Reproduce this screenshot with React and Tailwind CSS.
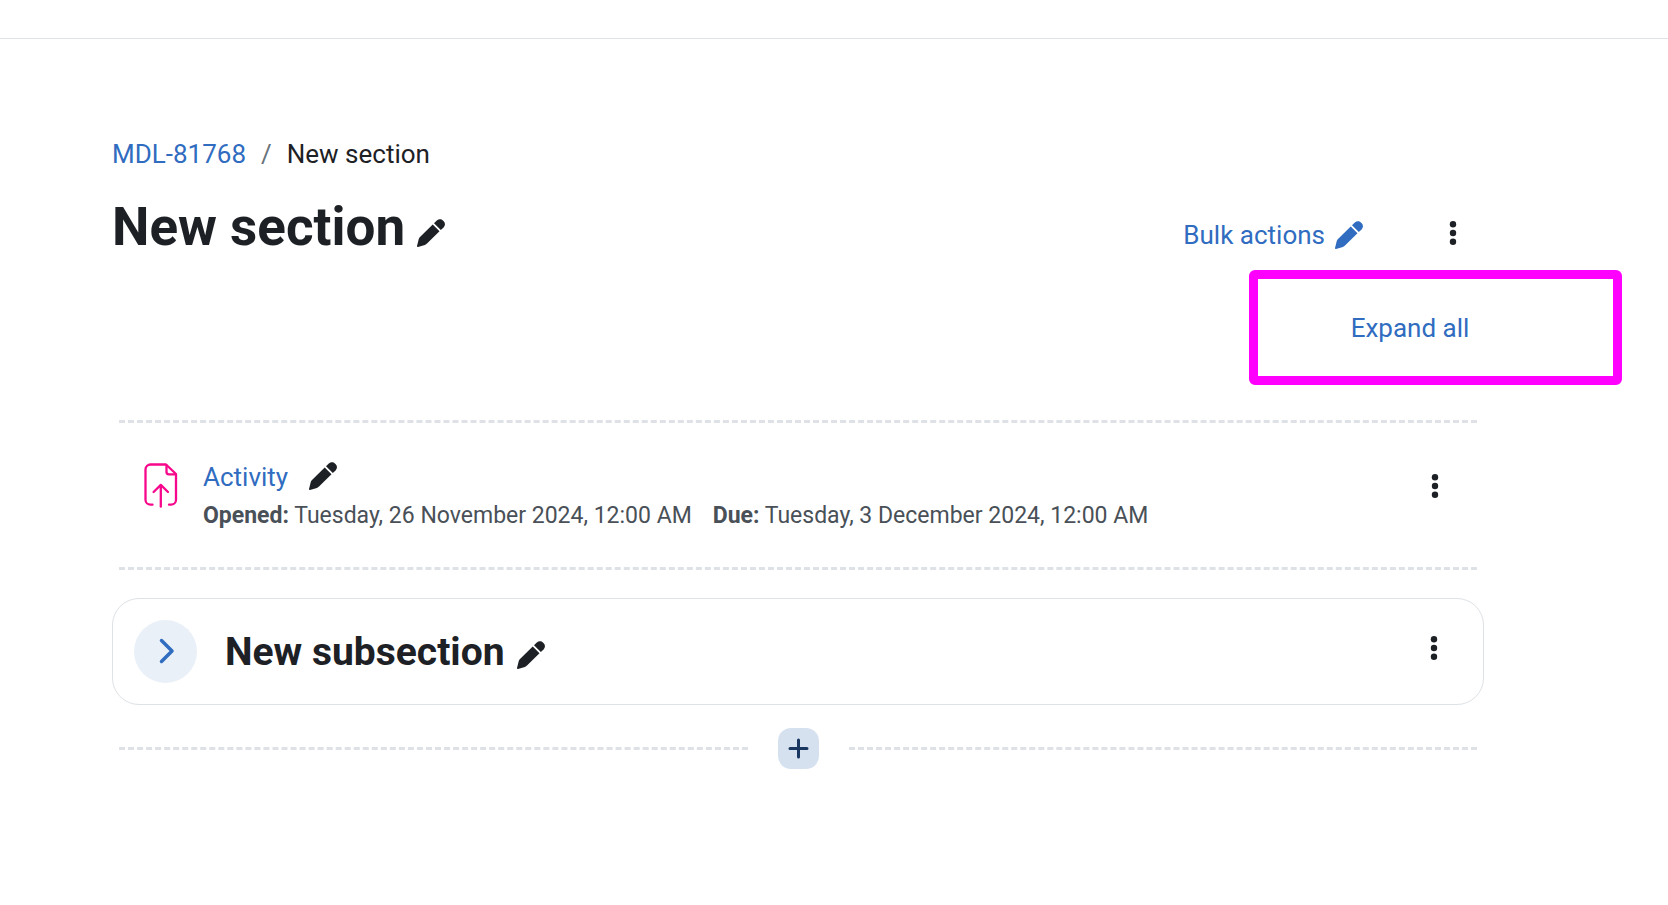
import { useState } from 'react';

const PencilIcon = () => (
  <svg viewBox="0 0 28 28" className="w-7 h-7 shrink-0" fill="currentColor" aria-hidden="true">
    <path d="M1 28C.3 28.100-.1 27.600 0 27L1.700 20.200C1.900 19.300 2.300 18.600 3 18L15.700 5.500L22.500 12.300L10 24.600C9.400 25.200 8.700 25.700 7.900 25.900Z" />
    <path d="M17 4.300L19.800 1.600C21.800-.3 24.300-.2 26.100 1.700L26.500 2.100C28.400 4 28.500 6.400 26.600 8.400L23.800 11.100Z" />
  </svg>
);

const DotsIcon = () => (
  <svg viewBox="0 0 8 24" className="w-2 h-6" fill="currentColor" aria-hidden="true">
    <circle cx="4" cy="3.300" r="3.200" />
    <circle cx="4" cy="12" r="3.200" />
    <circle cx="4" cy="20.700" r="3.200" />
  </svg>
);

const AssignIcon = () => (
  <svg
    viewBox="0 0 34 45"
    className="w-[34px] h-[45px] shrink-0"
    fill="none"
    stroke="currentColor"
    strokeWidth="2.300"
    strokeLinecap="round"
    strokeLinejoin="round"
    aria-hidden="true"
  >
    <path d="M8.500 41.700H6.500A5 5 0 0 1 1.500 36.700V6.500A5 5 0 0 1 6.500 1.500H22L32 11V36.700A5 5 0 0 1 27 41.700H25" />
    <path d="M22.500 2.500V9A2.300 2.300 0 0 0 24.800 11.300H31.500" />
    <path d="M16.800 43.700V22M9.600 29L16.800 21.900L24 29" />
  </svg>
);

const MenuButton = ({ label }) => (
  <button type="button" aria-label={label} className="flex items-center justify-center w-10 h-10 text-[#1d2125]">
    <DotsIcon />
  </button>
);

const Divider = () => <div className="flex-1 border-t-[3px] border-dashed border-[#dee2e6]" />;

export default function App() {
  const [expanded, setExpanded] = useState(false);

  return (
    <div className="min-h-screen bg-white text-[#1d2125] text-[26px] leading-[39px] font-['Roboto',sans-serif]">
      <header className="h-[39px] border-b border-[#dee2e6]" />

      <main className="pl-28 pr-[184px] pt-24">
        <nav aria-label="Breadcrumb">
          <ol className="flex">
            <li><a href="#course" className="text-[#306cbf]">MDL-81768</a></li>
            <li className="px-[15px] text-[#6a737b]" aria-hidden="true">/</li>
            <li>New section</li>
          </ol>
        </nav>

        <div className="flex items-center justify-between mt-[21px]">
          <div className="flex items-center gap-3">
            <h1 className="text-[53px] leading-[64px] font-bold">New section</h1>
            <button type="button" aria-label="Edit section name" className="pt-3">
              <PencilIcon />
            </button>
          </div>
          <div className="flex items-center pt-4 pr-[11px]">
            <button type="button" className="flex items-center gap-2.5 text-[#306cbf]">
              Bulk actions
              <PencilIcon />
            </button>
            <div className="ml-[70px] pb-1">
              <MenuButton label="Section menu" />
            </div>
          </div>
        </div>

        <div className="flex justify-end mt-[11px] -mr-[138px]">
          <div className="flex items-center justify-center w-[373px] h-[115px] pt-0.5 pr-[51px] border-[9px] border-[#ff00ff] rounded-md">
            <button type="button" onClick={() => setExpanded(!expanded)} className="text-[#306cbf]">
              Expand all
            </button>
          </div>
        </div>

        <div className="flex mt-[35px] px-[7px]"><Divider /></div>

        <section className="flex items-start justify-between pl-8 pr-[29px] h-36 pt-[35px]">
          <div className="flex items-start gap-[25px]">
            <span className="pt-[5px] text-[#f7078b]"><AssignIcon /></span>
            <div>
              <div className="flex items-center gap-[21px]">
                <a href="#activity" className="text-[#306cbf]">Activity</a>
                <button type="button" aria-label="Edit title" className="pb-1"><PencilIcon /></button>
              </div>
              <div className="flex gap-[21px] text-[23px] leading-[37px] text-[#495057]">
                <span><strong>Opened:</strong> Tuesday, 26 November 2024, 12:00 AM</span>
                <span><strong>Due:</strong> Tuesday, 3 December 2024, 12:00 AM</span>
              </div>
            </div>
          </div>
          <div className="pt-2">
            <MenuButton label="Activity menu" />
          </div>
        </section>

        <div className="flex px-[7px]"><Divider /></div>

        <section className="flex items-center justify-between mt-7 h-[107px] pl-[21px] pr-[29px] border border-[#dee2e6] rounded-[27px]">
          <div className="flex items-center">
            <button
              type="button"
              aria-label="Expand"
              aria-expanded={expanded}
              onClick={() => setExpanded(!expanded)}
              className="flex items-center justify-center w-[63px] h-[63px] pl-[3px] pb-0.5 rounded-full bg-[#e9f0f8] text-[#306cbf]"
            >
              <svg viewBox="0 0 16 26" className="w-4 h-[26px]" fill="none" stroke="currentColor" strokeWidth="3.500" strokeLinecap="round" strokeLinejoin="round" aria-hidden="true">
                <path d="M2.500 2.500L13 13L2.500 23.500" />
              </svg>
            </button>
            <h2 className="ml-7 pt-0.5 text-[39px] leading-[47px] font-bold">New subsection</h2>
            <button type="button" aria-label="Edit subsection name" className="ml-3 pt-1.5">
              <PencilIcon />
            </button>
          </div>
          <div className="pb-2">
            <MenuButton label="Subsection menu" />
          </div>
        </section>

        <div className="flex items-center gap-[30px] mt-[23px] px-[7px]">
          <Divider />
          <button type="button" aria-label="Add content" className="flex items-center justify-center w-[41px] h-[41px] rounded-[13px] bg-[#d6e1f0] text-[#183660]">
            <svg viewBox="0 0 21 21" className="w-[21px] h-[21px]" fill="none" stroke="currentColor" strokeWidth="3" strokeLinecap="round" aria-hidden="true">
              <path d="M10.500 2V19M2 10.500H19" />
            </svg>
          </button>
          <Divider />
        </div>
      </main>
    </div>
  );
}
